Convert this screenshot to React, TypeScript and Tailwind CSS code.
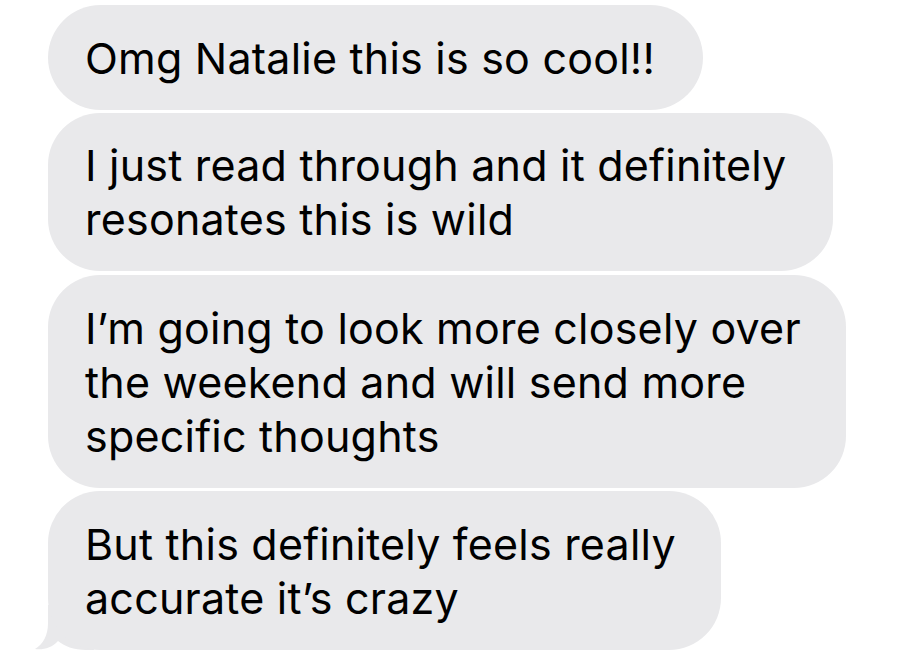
import React from "react";

const font = { fontFamily: "Inter, 'Noto Sans', sans-serif" };

export default function App() {
  return (
    <div className="w-[897px] h-[671px] bg-white overflow-hidden" style={font}>
      <div className="flex flex-col pt-[5px] pl-[48px]">
        <div className="w-[655px] h-[105px] rounded-[53px] bg-[#e9e9eb] flex items-center pl-[37px] text-[43px] leading-[54px] text-black tracking-[0.005em]">
          <p>Omg Natalie this is so cool!!</p>
        </div>
        <div className="mt-[3px] w-[785px] h-[158px] rounded-[52px] bg-[#e9e9eb] flex items-center pl-[37px] text-[43px] leading-[54px] text-black tracking-[0.005em]">
          <p>
            I just read through and it definitely
            <br />
            resonates this is wild
          </p>
        </div>
        <div className="mt-[4px] w-[798px] h-[213px] rounded-[52px] bg-[#e9e9eb] flex items-center pl-[37px] text-[43px] leading-[54px] text-black tracking-[0.005em]">
          <p>
            I’m going to look more closely over
            <br />
            the weekend and will send more
            <br />
            specific thoughts
          </p>
        </div>
        <div className="relative mt-[3px] w-[673px] h-[159px]">
          <svg
            className="absolute left-[-14px] bottom-0"
            width="60"
            height="45"
            viewBox="0 0 60 45"
          >
            <path
              d="M14 0 L14 18 C14 31 9 39 1 44 C9 45 18 43 24 36 C30 41 40 45 52 45 L60 45 L60 0 Z"
              fill="#e9e9eb"
            />
          </svg>
          <div className="relative w-full h-full rounded-[52px] bg-[#e9e9eb] flex items-center pl-[37px] text-[43px] leading-[54px] text-black tracking-[0.005em]">
            <p>
              But this definitely feels really
              <br />
              accurate it’s crazy
            </p>
          </div>
        </div>
      </div>
    </div>
  );
}
